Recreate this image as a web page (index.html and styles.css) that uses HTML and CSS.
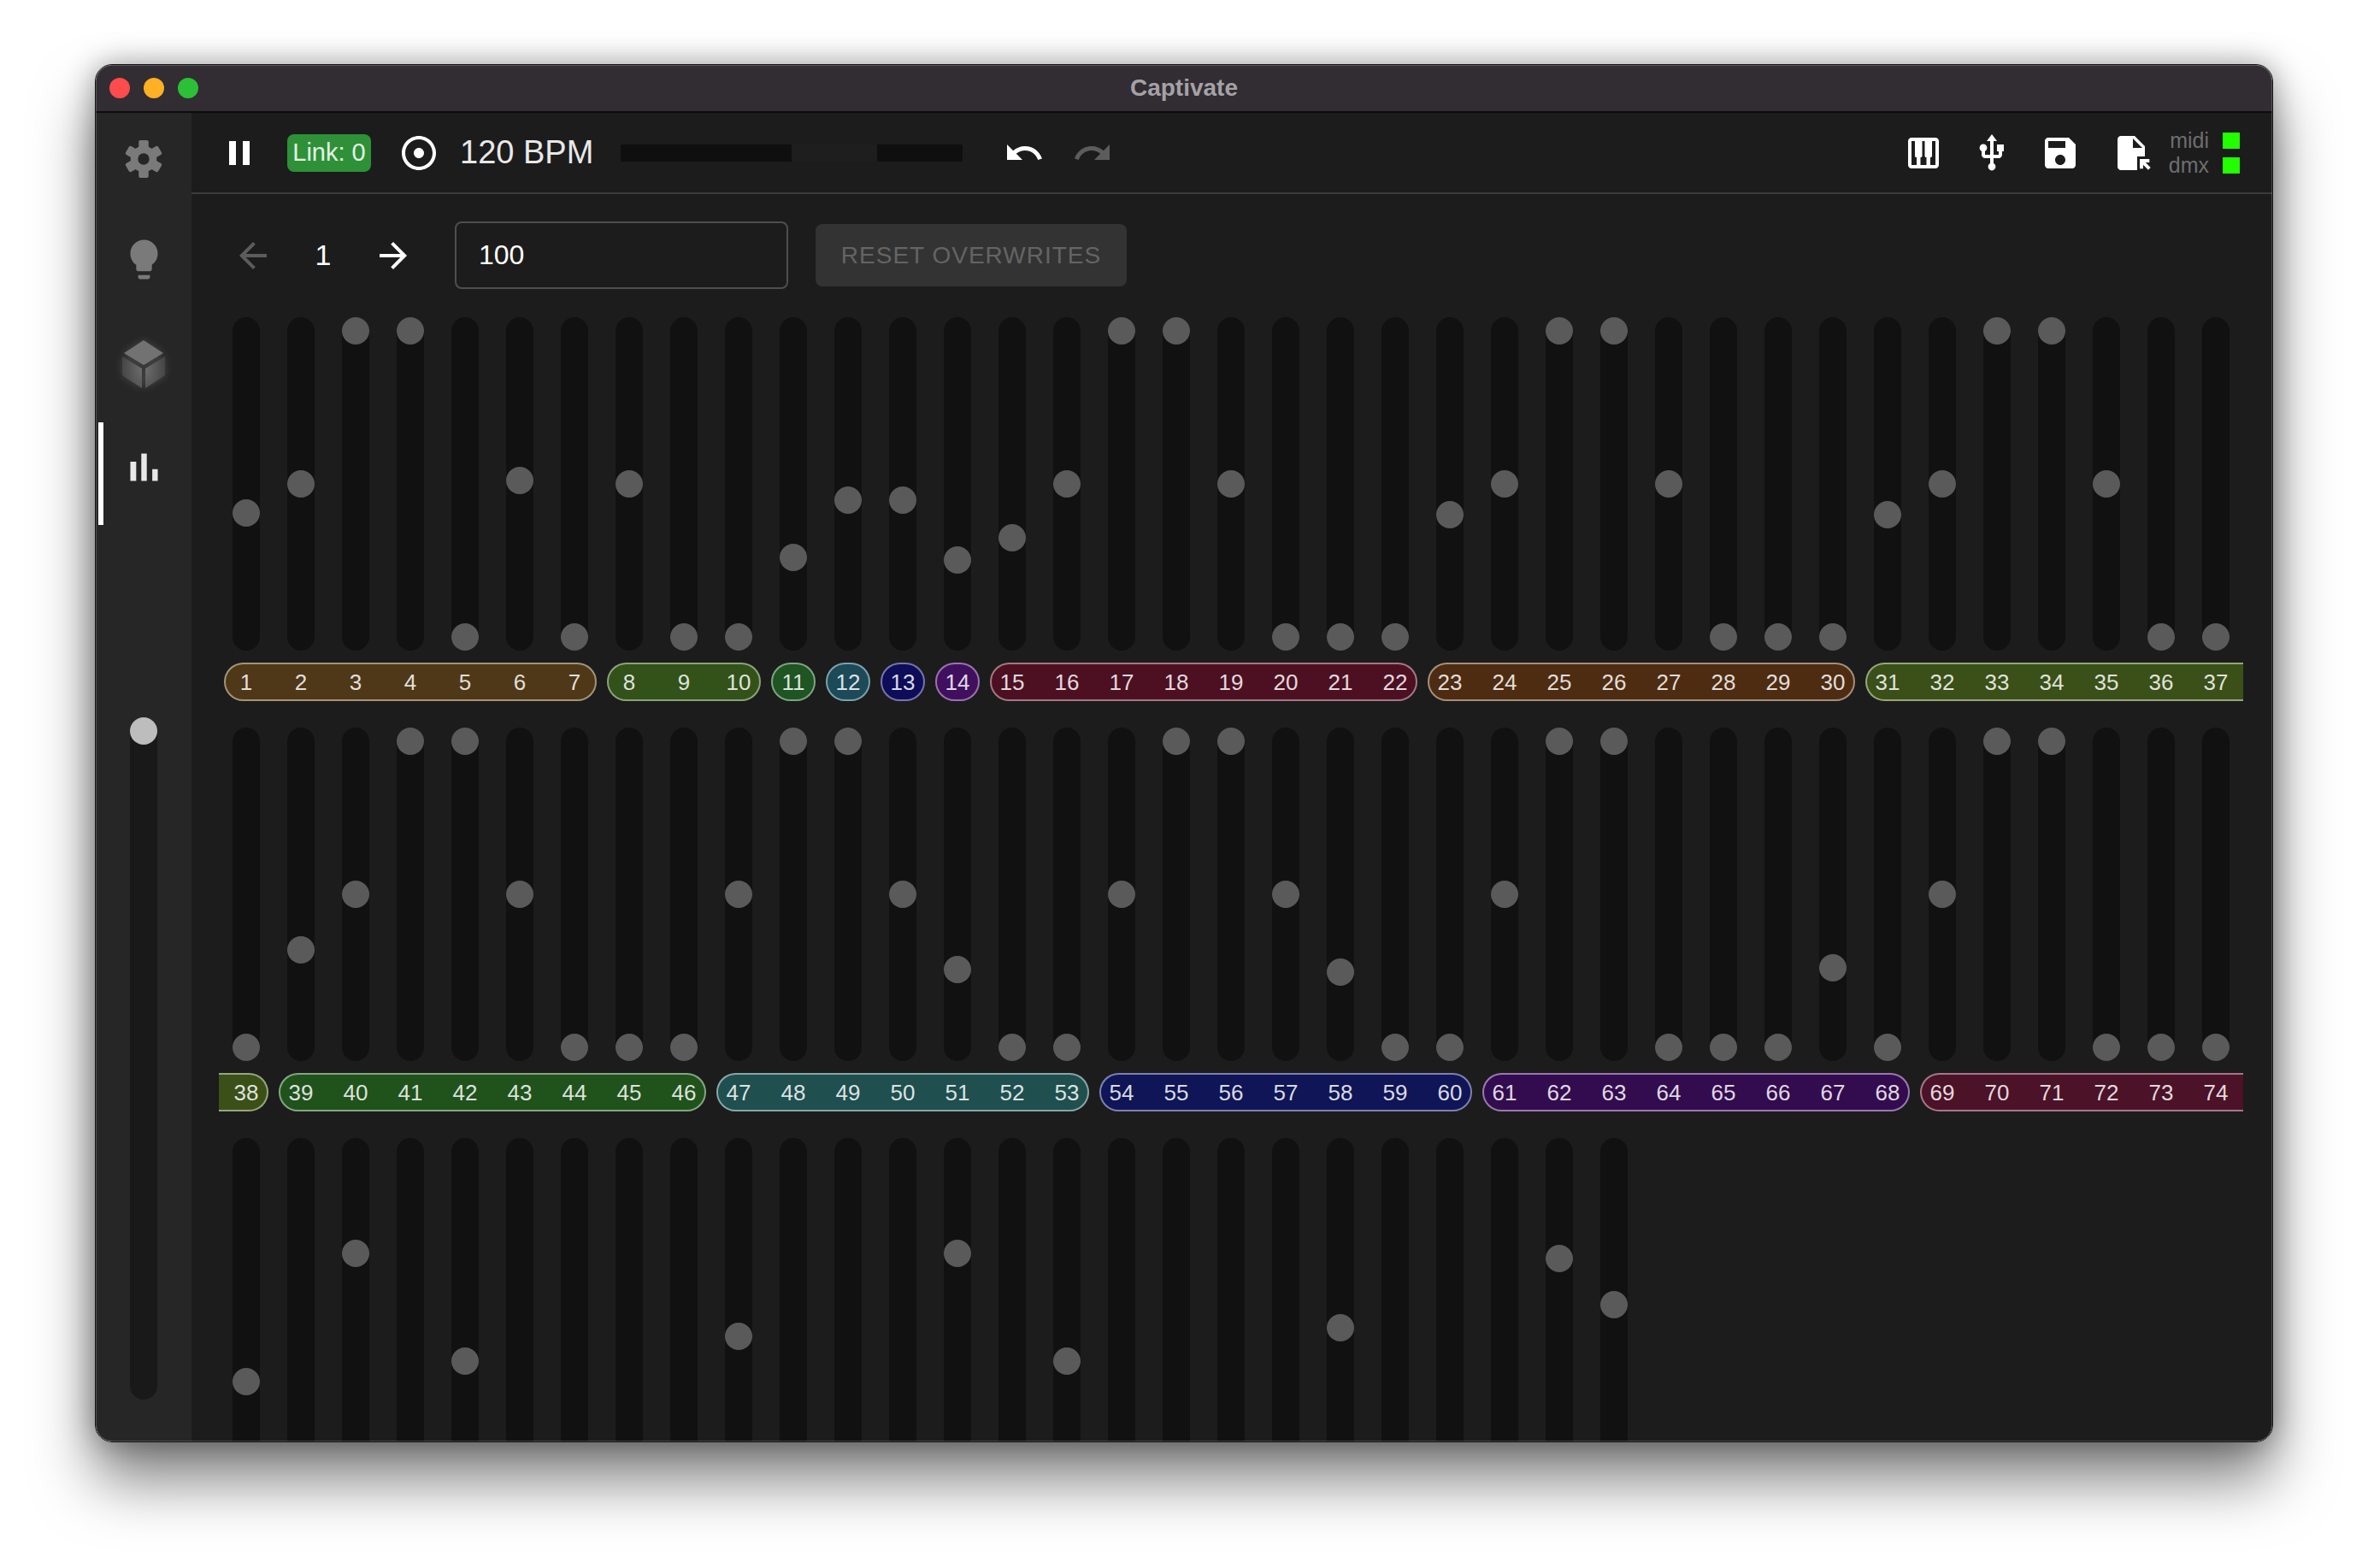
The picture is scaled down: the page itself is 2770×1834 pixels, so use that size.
FILE: index.html
```html
<!DOCTYPE html>
<html lang="en">
<head>
  <meta charset="UTF-8" />
  <title>Captivate</title>
  <link rel="stylesheet" href="styles.css">
</head>
<body>
  <div class="window">
    <div class="titlebar">
      <div class="lights">
        <span class="light red"></span>
        <span class="light yellow"></span>
        <span class="light green"></span>
      </div>
      <div class="title">Captivate</div>
    </div>

    <div class="app">
      <div class="sidebar">
        <div class="nav-item">
          <svg class="gear" width="44" height="46" viewBox="-23 -24 46 48">
            <circle r="16" />
            <rect x="-6" y="-23" width="12" height="46" rx="2" />
            <rect x="-6" y="-23" width="12" height="46" rx="2" transform="rotate(60)" />
            <rect x="-6" y="-23" width="12" height="46" rx="2" transform="rotate(120)" />
            <circle class="hole" r="7" />
          </svg>
        </div>
        <div class="nav-item">
          <svg class="icon-dim bulb" width="55" height="55" viewBox="0 0 24 24"><path d="M9 21c0 .5.4 1 1 1h4c.6 0 1-.5 1-1v-1H9v1zm3-19C8.1 2 5 5.1 5 9c0 2.4 1.2 4.5 3 5.7V17c0 .5.4 1 1 1h6c.6 0 1-.5 1-1v-2.3c1.8-1.3 3-3.4 3-5.7 0-3.9-3.1-7-7-7z"/></svg>
        </div>
        <div class="nav-item">
          <svg class="cube" width="52" height="58" viewBox="0 0 52 58">
            <defs>
              <radialGradient id="faceLeft" cx="1" cy="0.4" r="1.1">
                <stop offset="0" stop-color="#6c6c6c" />
                <stop offset="1" stop-color="#424242" />
              </radialGradient>
              <radialGradient id="faceRight" cx="0" cy="0.4" r="1.1">
                <stop offset="0" stop-color="#6c6c6c" />
                <stop offset="1" stop-color="#424242" />
              </radialGradient>
            </defs>
            <polygon fill="#727272" points="26,1 49,16 26,30 3,16" />
            <polygon fill="url(#faceLeft)" points="1,20 24,34 24,57 1,42" />
            <polygon fill="url(#faceRight)" points="51,20 28,34 28,57 51,42" />
          </svg>
        </div>
        <div class="nav-item active">
          <svg class="icon-on" width="55" height="55" viewBox="0 0 24 24"><path d="M5 9.2h3V19H5zM10.6 5h2.8v14h-2.8zm5.6 8H19v6h-2.8z"/></svg>
        </div>
        <div class="master">
          <div class="master-thumb"></div>
        </div>
      </div>

      <div class="main">
        <div class="toolbar">
          <svg class="icon" width="48" height="48" viewBox="0 0 24 24"><path d="M6 19h4V5H6v14zm8-14v14h4V5h-4z"/></svg>
          <div class="link-badge">Link: 0</div>
          <svg class="icon" width="48" height="48" viewBox="0 0 24 24"><path d="M12 2C6.49 2 2 6.49 2 12s4.49 10 10 10 10-4.49 10-10S17.51 2 12 2zm0 18c-4.41 0-8-3.59-8-8s3.59-8 8-8 8 3.59 8 8-3.59 8-8 8zm3-8c0 1.66-1.34 3-3 3s-3-1.34-3-3 1.34-3 3-3 3 1.34 3 3z"/></svg>
          <div class="bpm">120 BPM</div>
          <div class="beat-bar"><div class="beat-fill"></div></div>
          <svg class="icon" width="48" height="48" viewBox="0 0 24 24"><path d="M12.5 8c-2.65 0-5.05.99-6.9 2.6L2 7v9h9l-3.62-3.62c1.39-1.16 3.16-1.88 5.12-1.88 3.54 0 6.55 2.31 7.6 5.5l2.37-.78C21.08 11.03 17.15 8 12.5 8z"/></svg>
          <svg class="icon disabled" width="48" height="48" viewBox="0 0 24 24"><path d="M18.4 10.6C16.55 8.99 14.15 8 11.5 8c-4.65 0-8.58 3.03-9.96 7.22L3.9 16c1.05-3.19 4.05-5.5 7.6-5.5 1.95 0 3.73.72 5.12 1.88L13 16h9V7l-3.6 3.6z"/></svg>

          <div class="toolbar-right">
            <svg class="icon" width="48" height="48" viewBox="0 0 24 24"><path d="M19 3H5c-1.1 0-2 .9-2 2v14c0 1.1.9 2 2 2h14c1.1 0 2-.9 2-2V5c0-1.1-.9-2-2-2zm-5.5 11.5h.25V19h-3.5v-4.5h.25c.41 0 .75-.34.75-.75V5h1.5v8.75c0 .41.34.75.75.75zM5 5h2v8.75c0 .41.34.75.75.75H8V19H5V5zm14 14h-3v-4.5h.25c.41 0 .75-.34.75-.75V5h2v14z"/></svg>
            <svg class="icon" width="48" height="48" viewBox="0 0 24 24"><path d="M15 7v4h1v2h-3V5h2l-3-4-3 4h2v8H8v-2.07c.7-.37 1.2-1.08 1.2-1.93 0-1.21-.99-2.2-2.2-2.2-1.21 0-2.2.99-2.2 2.2 0 .85.5 1.56 1.2 1.93V13c0 1.11.89 2 2 2h3v3.05c-.71.37-1.2 1.1-1.2 1.95 0 1.22.99 2.2 2.2 2.2 1.21 0 2.2-.98 2.2-2.2 0-.85-.49-1.58-1.2-1.95V15h3c1.11 0 2-.89 2-2v-2h1V7h-4z"/></svg>
            <svg class="icon" width="48" height="48" viewBox="0 0 24 24"><path d="M17 3H5c-1.11 0-2 .9-2 2v14c0 1.1.89 2 2 2h14c1.1 0 2-.9 2-2V7l-4-4zm-5 16c-1.66 0-3-1.34-3-3s1.34-3 3-3 3 1.34 3 3-1.34 3-3 3zm3-10H5V5h10v4z"/></svg>
            <svg class="icon file-icon" width="48" height="48" viewBox="0 0 24 24"><path d="M15.5 22H6c-1.1 0-2-.9-2-2V4c0-1.1.9-2 2-2h8l6 6v6h-4.500v8zM13 3.500V9h5.500L13 3.500z" fill-rule="evenodd"/><path d="M17 15.500h5.660v2h-2.250l2.950 2.950-1.410 1.410L19 18.910v2.250h-2z"/></svg>
            <div class="status">
              <span class="status-label">midi</span><span class="status-led"></span>
              <span class="status-label">dmx</span><span class="status-led"></span>
            </div>
          </div>
        </div>

        <div class="page-row">
          <svg class="icon disabled" width="48" height="48" viewBox="0 0 24 24"><path d="M20 11H7.83l5.59-5.59L12 4l-8 8 8 8 1.41-1.41L7.83 13H20v-2z"/></svg>
          <div class="page-number">1</div>
          <svg class="icon" width="48" height="48" viewBox="0 0 24 24"><path d="M12 4l-1.41 1.41L16.17 11H4v2h12.17l-5.58 5.59L12 20l8-8z"/></svg>
          <div class="text-input">100</div>
          <div class="reset-button">RESET OVERWRITES</div>
        </div>

        <div class="bank">
          <div class="faders">
            <div class="fader"><div class="thumb" style="--v:.406"></div></div>
            <div class="fader"><div class="thumb" style="--v:.5"></div></div>
            <div class="fader"><div class="thumb" style="--v:1"></div></div>
            <div class="fader"><div class="thumb" style="--v:1"></div></div>
            <div class="fader"><div class="thumb"></div></div>
            <div class="fader"><div class="thumb" style="--v:.51"></div></div>
            <div class="fader"><div class="thumb"></div></div>
            <div class="fader"><div class="thumb" style="--v:.5"></div></div>
            <div class="fader"><div class="thumb"></div></div>
            <div class="fader"><div class="thumb"></div></div>
            <div class="fader"><div class="thumb" style="--v:.261"></div></div>
            <div class="fader"><div class="thumb" style="--v:.448"></div></div>
            <div class="fader"><div class="thumb" style="--v:.448"></div></div>
            <div class="fader"><div class="thumb" style="--v:.251"></div></div>
            <div class="fader"><div class="thumb" style="--v:.323"></div></div>
            <div class="fader"><div class="thumb" style="--v:.5"></div></div>
            <div class="fader"><div class="thumb" style="--v:1"></div></div>
            <div class="fader"><div class="thumb" style="--v:1"></div></div>
            <div class="fader"><div class="thumb" style="--v:.5"></div></div>
            <div class="fader"><div class="thumb"></div></div>
            <div class="fader"><div class="thumb"></div></div>
            <div class="fader"><div class="thumb"></div></div>
            <div class="fader"><div class="thumb" style="--v:.4"></div></div>
            <div class="fader"><div class="thumb" style="--v:.5"></div></div>
            <div class="fader"><div class="thumb" style="--v:1"></div></div>
            <div class="fader"><div class="thumb" style="--v:1"></div></div>
            <div class="fader"><div class="thumb" style="--v:.5"></div></div>
            <div class="fader"><div class="thumb"></div></div>
            <div class="fader"><div class="thumb"></div></div>
            <div class="fader"><div class="thumb"></div></div>
            <div class="fader"><div class="thumb" style="--v:.4"></div></div>
            <div class="fader"><div class="thumb" style="--v:.5"></div></div>
            <div class="fader"><div class="thumb" style="--v:1"></div></div>
            <div class="fader"><div class="thumb" style="--v:1"></div></div>
            <div class="fader"><div class="thumb" style="--v:.5"></div></div>
            <div class="fader"><div class="thumb"></div></div>
            <div class="fader"><div class="thumb"></div></div>
          </div>
          <div class="chips">
            <div class="chip c-amber"><span>1</span><span>2</span><span>3</span><span>4</span><span>5</span><span>6</span><span>7</span></div>
            <div class="chip c-lime"><span>8</span><span>9</span><span>10</span></div>
            <div class="chip c-green"><span>11</span></div>
            <div class="chip c-teal"><span>12</span></div>
            <div class="chip c-navy"><span>13</span></div>
            <div class="chip c-violet"><span>14</span></div>
            <div class="chip c-wine"><span>15</span><span>16</span><span>17</span><span>18</span><span>19</span><span>20</span><span>21</span><span>22</span></div>
            <div class="chip c-brown"><span>23</span><span>24</span><span>25</span><span>26</span><span>27</span><span>28</span><span>29</span><span>30</span></div>
            <div class="chip c-olive open-right"><span>31</span><span>32</span><span>33</span><span>34</span><span>35</span><span>36</span><span>37</span></div>
          </div>
        </div>

        <div class="bank">
          <div class="faders">
            <div class="fader"><div class="thumb"></div></div>
            <div class="fader"><div class="thumb" style="--v:.318"></div></div>
            <div class="fader"><div class="thumb" style="--v:.5"></div></div>
            <div class="fader"><div class="thumb" style="--v:1"></div></div>
            <div class="fader"><div class="thumb" style="--v:1"></div></div>
            <div class="fader"><div class="thumb" style="--v:.5"></div></div>
            <div class="fader"><div class="thumb"></div></div>
            <div class="fader"><div class="thumb"></div></div>
            <div class="fader"><div class="thumb"></div></div>
            <div class="fader"><div class="thumb" style="--v:.5"></div></div>
            <div class="fader"><div class="thumb" style="--v:1"></div></div>
            <div class="fader"><div class="thumb" style="--v:1"></div></div>
            <div class="fader"><div class="thumb" style="--v:.5"></div></div>
            <div class="fader"><div class="thumb" style="--v:.254"></div></div>
            <div class="fader"><div class="thumb"></div></div>
            <div class="fader"><div class="thumb"></div></div>
            <div class="fader"><div class="thumb" style="--v:.5"></div></div>
            <div class="fader"><div class="thumb" style="--v:1"></div></div>
            <div class="fader"><div class="thumb" style="--v:1"></div></div>
            <div class="fader"><div class="thumb" style="--v:.5"></div></div>
            <div class="fader"><div class="thumb" style="--v:.246"></div></div>
            <div class="fader"><div class="thumb"></div></div>
            <div class="fader"><div class="thumb"></div></div>
            <div class="fader"><div class="thumb" style="--v:.5"></div></div>
            <div class="fader"><div class="thumb" style="--v:1"></div></div>
            <div class="fader"><div class="thumb" style="--v:1"></div></div>
            <div class="fader"><div class="thumb"></div></div>
            <div class="fader"><div class="thumb"></div></div>
            <div class="fader"><div class="thumb"></div></div>
            <div class="fader"><div class="thumb" style="--v:.259"></div></div>
            <div class="fader"><div class="thumb"></div></div>
            <div class="fader"><div class="thumb" style="--v:.5"></div></div>
            <div class="fader"><div class="thumb" style="--v:1"></div></div>
            <div class="fader"><div class="thumb" style="--v:1"></div></div>
            <div class="fader"><div class="thumb"></div></div>
            <div class="fader"><div class="thumb"></div></div>
            <div class="fader"><div class="thumb"></div></div>
          </div>
          <div class="chips">
            <div class="chip c-olive open-left"><span>38</span></div>
            <div class="chip c-forest"><span>39</span><span>40</span><span>41</span><span>42</span><span>43</span><span>44</span><span>45</span><span>46</span></div>
            <div class="chip c-sea"><span>47</span><span>48</span><span>49</span><span>50</span><span>51</span><span>52</span><span>53</span></div>
            <div class="chip c-blue"><span>54</span><span>55</span><span>56</span><span>57</span><span>58</span><span>59</span><span>60</span></div>
            <div class="chip c-purple"><span>61</span><span>62</span><span>63</span><span>64</span><span>65</span><span>66</span><span>67</span><span>68</span></div>
            <div class="chip c-plum open-right"><span>69</span><span>70</span><span>71</span><span>72</span><span>73</span><span>74</span></div>
          </div>
        </div>

        <div class="bank">
          <div class="faders">
            <div class="fader"><div class="thumb" style="--v:.25"></div></div>
            <div class="fader"><div class="thumb"></div></div>
            <div class="fader"><div class="thumb" style="--v:.667"></div></div>
            <div class="fader"><div class="thumb"></div></div>
            <div class="fader"><div class="thumb" style="--v:.315"></div></div>
            <div class="fader"><div class="thumb"></div></div>
            <div class="fader"><div class="thumb"></div></div>
            <div class="fader"><div class="thumb"></div></div>
            <div class="fader"><div class="thumb"></div></div>
            <div class="fader"><div class="thumb" style="--v:.397"></div></div>
            <div class="fader"><div class="thumb"></div></div>
            <div class="fader"><div class="thumb"></div></div>
            <div class="fader"><div class="thumb"></div></div>
            <div class="fader"><div class="thumb" style="--v:.667"></div></div>
            <div class="fader"><div class="thumb"></div></div>
            <div class="fader"><div class="thumb" style="--v:.315"></div></div>
            <div class="fader"><div class="thumb"></div></div>
            <div class="fader"><div class="thumb"></div></div>
            <div class="fader"><div class="thumb"></div></div>
            <div class="fader"><div class="thumb"></div></div>
            <div class="fader"><div class="thumb" style="--v:.424"></div></div>
            <div class="fader"><div class="thumb"></div></div>
            <div class="fader"><div class="thumb"></div></div>
            <div class="fader"><div class="thumb"></div></div>
            <div class="fader"><div class="thumb" style="--v:.65"></div></div>
            <div class="fader"><div class="thumb" style="--v:.5"></div></div>
          </div>
        </div>
      </div>
    </div>
  </div>
</body>
</html>
```

FILE: styles.css
```css
body {
  margin: 0;
  padding: 75px 0 0 111px;
  height: 1834px;
  box-sizing: border-box;
  overflow: hidden;
  background: #fff;
  font-family: 'Liberation Sans', Arial, sans-serif;
}

.window {
  position: relative;
  width: 2548px;
  height: 1612px;
  box-sizing: border-box;
  display: flex;
  flex-direction: column;
  border: 1px solid #111;
  border-radius: 20px;
  overflow: hidden;
  box-shadow: 0 44px 70px rgba(0, 0, 0, 0.5), 0 0 34px rgba(0, 0, 0, 0.35);
}

/* thin light edge on top of everything */
.window::after {
  content: "";
  position: absolute;
  inset: 0;
  border-radius: 19px;
  box-shadow: inset 0 0 0 1px rgba(255, 255, 255, 0.2);
  pointer-events: none;
}

.titlebar {
  flex: 0 0 54px;
  position: relative;
  display: flex;
  align-items: center;
  justify-content: center;
  background: #312d33;
  border-bottom: 2px solid #0c0c0c;
  box-sizing: content-box;
}

.lights {
  position: absolute;
  left: 16px;
  display: flex;
  gap: 16px;
}

.light {
  width: 24px;
  height: 24px;
  border-radius: 50%;
}

.light.red { background: #fe4b4c; }
.light.yellow { background: #ffb024; }
.light.green { background: #2bc035; }

.title {
  font-size: 28px;
  font-weight: bold;
  color: #a5a2a6;
}

.app {
  flex: 1;
  display: flex;
  min-height: 0;
}

.sidebar {
  flex: 0 0 112px;
  display: flex;
  flex-direction: column;
  align-items: center;
  padding-top: 2px;
  box-sizing: border-box;
  background: #262626;
}

.nav-item {
  position: relative;
  width: 100%;
  height: 120px;
  flex-shrink: 0;
  padding-bottom: 16px;
  box-sizing: border-box;
  display: flex;
  align-items: center;
  justify-content: center;
}

.nav-item.active::before {
  content: "";
  position: absolute;
  left: 3px;
  top: 0;
  bottom: 0;
  width: 6px;
  background: #fff;
}

.gear { fill: #7a7a7a; }
.gear .hole { fill: #262626; }
.icon-dim { fill: #7a7a7a; }
.icon-on { fill: #e8e8e8; }

.bulb {
  margin-bottom: 6px;
}

.cube {
  filter: drop-shadow(0 0 5px rgba(255, 255, 255, 0.16));
}

.master {
  position: relative;
  width: 32px;
  height: 798px;
  margin-top: 225px;
  flex-shrink: 0;
  border-radius: 16px;
  background: #191919;
}

.master-thumb {
  width: 32px;
  height: 32px;
  border-radius: 50%;
  background: #bdbdbd;
}

.main {
  flex: 1;
  min-width: 0;
  background: #1c1c1c;
}

.toolbar {
  height: 93px;
  display: flex;
  align-items: center;
  padding: 0 38px 0 32px;
  border-bottom: 2px solid #3a3a3a;
}

.icon {
  flex-shrink: 0;
  fill: #fff;
}

.icon.disabled {
  fill: #5c5c5c;
}

.link-badge {
  margin: 0 32px;
  width: 98px;
  height: 44px;
  display: flex;
  align-items: center;
  justify-content: center;
  font-size: 29px;
  color: #e6f2e6;
  background: #2e9137;
  border-radius: 8px;
}

.bpm {
  margin-left: 24px;
  width: 188px;
  font-size: 38px;
  color: #e8e8e8;
  white-space: nowrap;
}

.beat-bar {
  width: 400px;
  height: 20px;
  margin-right: 48px;
  background: #0f0f0f;
}

.beat-fill {
  width: 100px;
  height: 20px;
  margin-left: 200px;
  background: #1e1e1e;
}

.toolbar .icon + .icon {
  margin-left: 32px;
}

.toolbar .icon.file-icon {
  margin-left: 35px;
}

.toolbar-right {
  margin-left: auto;
  display: flex;
  align-items: center;
}

.status {
  margin-left: 20px;
  display: grid;
  grid-template-columns: auto 20px;
  column-gap: 16px;
  row-gap: 10px;
  align-items: center;
  font-size: 25px;
  line-height: 19px;
  color: #6e6e6e;
}

.status-label {
  text-align: right;
}

.status-led {
  width: 20px;
  height: 19px;
  background: #22ff00;
}

.page-row {
  height: 79px;
  display: flex;
  align-items: center;
  margin-top: 32px;
  padding-left: 48px;
}

.page-number {
  width: 116px;
  text-align: center;
  font-size: 34px;
  color: #fff;
}

.text-input {
  width: 390px;
  height: 79px;
  margin-left: 48px;
  padding-left: 26px;
  box-sizing: border-box;
  display: flex;
  align-items: center;
  font-size: 32px;
  color: #fff;
  border: 2px solid #4e4e4e;
  border-radius: 8px;
}

.reset-button {
  width: 364px;
  height: 73px;
  margin-left: 32px;
  display: flex;
  align-items: center;
  justify-content: center;
  font-size: 28px;
  letter-spacing: 1px;
  color: #646464;
  background: #333;
  border-radius: 8px;
}

.bank {
  width: 2368px;
  height: 480px;
  margin: 33px 0 -33px 32px;
  overflow: hidden;
}

.bank + .bank {
  margin-top: 33px;
}

.faders {
  height: 390px;
  display: flex;
}

.fader {
  position: relative;
  flex: 0 0 32px;
  height: 390px;
  margin: 0 16px;
  border-radius: 16px;
  background: #111;
}

.thumb {
  position: absolute;
  left: 0;
  bottom: calc(var(--v, 0) * 358px);
  width: 32px;
  height: 32px;
  border-radius: 50%;
  background: #5a5a5a;
}

.chips {
  display: flex;
  margin-top: 14px;
}

.chip {
  flex-shrink: 0;
  height: 45px;
  box-sizing: border-box;
  margin: 0 6px;
  padding-top: 2px;
  display: flex;
  gap: 12px;
  align-items: center;
  border: 2px solid;
  border-radius: 23px;
  font-size: 26px;
  color: rgba(255, 255, 255, 0.85);
}

.chip span {
  width: 52px;
  text-align: center;
}

.chip span:first-child { margin-left: -2px; }
.chip span:last-child { margin-right: -2px; }

/* group goes on in the row below */
.chip.open-right {
  margin-right: 0;
  padding-right: 8px;
  border-right: 0;
  border-radius: 23px 0 0 23px;
}

.chip.open-left {
  margin-left: 0;
  padding-left: 8px;
  border-left: 0;
  border-radius: 0 23px 23px 0;
}

.c-amber { background: #4f3818; border-color: #a39479; }
.c-lime { background: #33521a; border-color: #8ba27a; }
.c-green { background: #1f5423; border-color: #7fa382; }
.c-teal { background: #1c4a59; border-color: #7ba0ab; }
.c-navy { background: #0d0d5a; border-color: #7575ab; }
.c-violet { background: #40105f; border-color: #9a72ad; }
.c-wine { background: #4d1022; border-color: #a27884; }
.c-brown { background: #4e2c12; border-color: #a58f7c; }
.c-olive { background: #3a5018; border-color: #97a67c; }
.c-forest { background: #20521c; border-color: #84a581; }
.c-sea { background: #1f4f4f; border-color: #87a5a7; }
.c-blue { background: #0f1556; border-color: #7d80b0; }
.c-purple { background: #330c4f; border-color: #9a78ad; }
.c-plum { background: #4c1228; border-color: #a5778c; }
```
